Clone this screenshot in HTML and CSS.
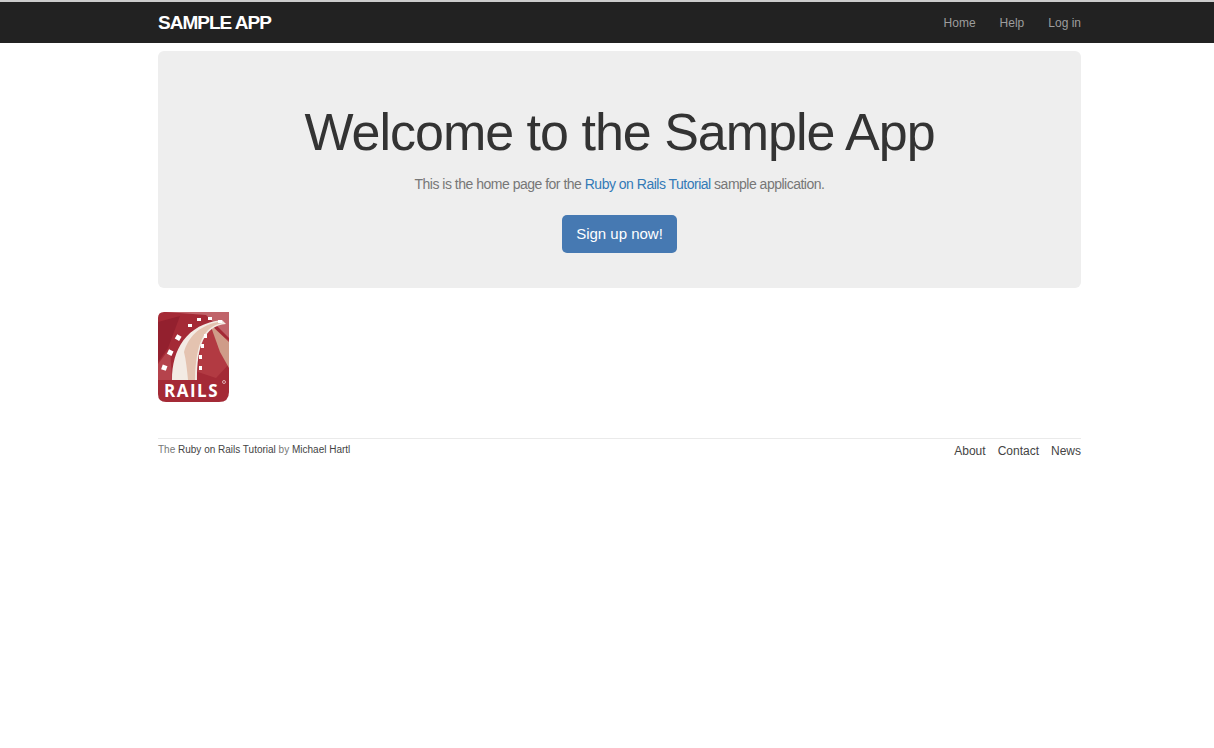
FILE: index.html
```html
<!DOCTYPE html>
<html lang="en">

<head>
    <meta charset="UTF-8">
    <title>Ruby on Rails Tutorial Sample App</title>
    <link rel="stylesheet" href="styles.css">
</head>

<body>

    <header class="navbar">
        <div class="container navbar-inner">
            <a class="logo" href="#">Sample App</a>
            <nav class="nav-links">
                <a href="#">Home</a>
                <a href="#">Help</a>
                <a href="#">Log in</a>
            </nav>
        </div>
    </header>

    <div class="container">
        <section class="hero">
            <h1>Welcome to the Sample App</h1>
            <h2>This is the home page for the <a href="#">Ruby on Rails Tutorial</a> sample application.</h2>
            <a class="btn" href="#">Sign up now!</a>
        </section>

        <a class="rails-logo" href="#">
            <svg width="71" height="90" viewBox="0 0 71 90">
                <path d="M6 0H71V80Q71 90 61 90H8Q0 90 0 82V6Q0 0 6 0Z" fill="#a42a36" />
                <path d="M8 0H71V26L48 3Z" fill="#c0646a" />
                <path d="M0 10L22 4L10 36L0 50Z" fill="#93202e" />
                <path d="M45 14L71 28V52L58 66L40 60Z" fill="#b23a42" />
                <path d="M52 12L71 30V56L62 40Z" fill="#cf9c88" />
                <path d="M0 52L12 36L14 68H0Z" fill="#b5434c" />
                <path d="M14 68C14 38 28 12 64 8L68 12C46 14 39 34 39 68Z" fill="#f3ebe4" />
                <path d="M26 40C30 26 40 14 60 10L64 11C46 15 38 30 37 68H30C29 58 28 48 26 40Z" fill="#e4c3b0" />
                <g fill="#fff">
                    <rect x="10" y="38" width="5" height="5" transform="rotate(25 12 40)" />
                    <rect x="18" y="23" width="5" height="5" transform="rotate(30 20 25)" />
                    <rect x="4" y="53" width="5" height="5" transform="rotate(20 6 55)" />
                    <rect x="30" y="12" width="4" height="3" />
                    <rect x="39" y="6" width="4" height="3" />
                    <rect x="50" y="5" width="4" height="3" />
                    <rect x="60" y="8" width="4" height="3" />
                    <rect x="46" y="22" width="3" height="4" />
                    <rect x="43" y="32" width="3" height="4" />
                    <rect x="41" y="43" width="3" height="4" />
                    <rect x="41" y="54" width="3" height="4" />
                </g>
                <text class="rails-word" x="6" y="85">RAILS</text>
                <circle cx="66" cy="70" r="1.5" fill="none" stroke="#fff" stroke-width=".6" />
            </svg>
        </a>

        <footer class="footer">
            <small>The <a href="#">Ruby on Rails Tutorial</a> by <a href="#">Michael Hartl</a></small>
            <nav class="footer-links">
                <a href="#">About</a>
                <a href="#">Contact</a>
                <a href="#">News</a>
            </nav>
        </footer>
    </div>

</body>

</html>
```

FILE: styles.css
```css
body {
    margin: 0;
    padding-top: 2px;
    background-color: white;
    font-family: "Liberation Sans", Arial, sans-serif;
    font-size: 14px;
    color: #333;
}

a {
    text-decoration: none;
}

.container {
    width: 923px;
    margin-left: 158px;
}

.navbar {
    height: 41px;
    background-color: #222;
    box-shadow: 0 -2px 0 #ccc;
}

.navbar-inner {
    display: flex;
    justify-content: space-between;
    align-items: center;
    height: 100%;
}

.logo {
    color: white;
    font-size: 19px;
    font-weight: bold;
    letter-spacing: -1px;
    text-transform: uppercase;
}

.nav-links {
    display: flex;
    gap: 24px;
    font-size: 12px;
}

.nav-links a {
    color: #9d9d9d;
}

.hero {
    margin-top: 8px;
    height: 237px;
    box-sizing: border-box;
    padding-top: 50px;
    background-color: #eee;
    border-radius: 6px;
    text-align: center;
}

h1 {
    margin: 0;
    font-size: 52px;
    line-height: 62px;
    font-weight: normal;
    letter-spacing: -1px;
}

h2 {
    margin: 11px 0 0;
    font-size: 14px;
    line-height: 20px;
    font-weight: normal;
    letter-spacing: -0.5px;
    color: #777;
}

h2 a {
    color: #337ab7;
}

.btn {
    display: inline-block;
    margin-top: 21px;
    padding: 10px 14px;
    background-color: #4679b2;
    border-radius: 5px;
    color: white;
    font-size: 15px;
    line-height: 18px;
}

.rails-logo {
    display: block;
    margin-top: 24px;
    width: 71px;
    height: 90px;
}

.rails-logo svg {
    display: block;
}

.rails-word {
    font-family: "Open Sans", sans-serif;
    font-size: 17px;
    font-weight: bold;
    letter-spacing: 1.5px;
    fill: white;
}

.footer {
    display: flex;
    justify-content: space-between;
    align-items: flex-start;
    margin-top: 36px;
    padding-top: 5px;
    border-top: 1px solid #eaeaea;
}

.footer small {
    font-size: 10px;
    line-height: 12px;
    color: #777;
}

.footer a {
    color: #444;
}

.footer-links {
    display: flex;
    gap: 12px;
    font-size: 12px;
    line-height: 14px;
}
```
